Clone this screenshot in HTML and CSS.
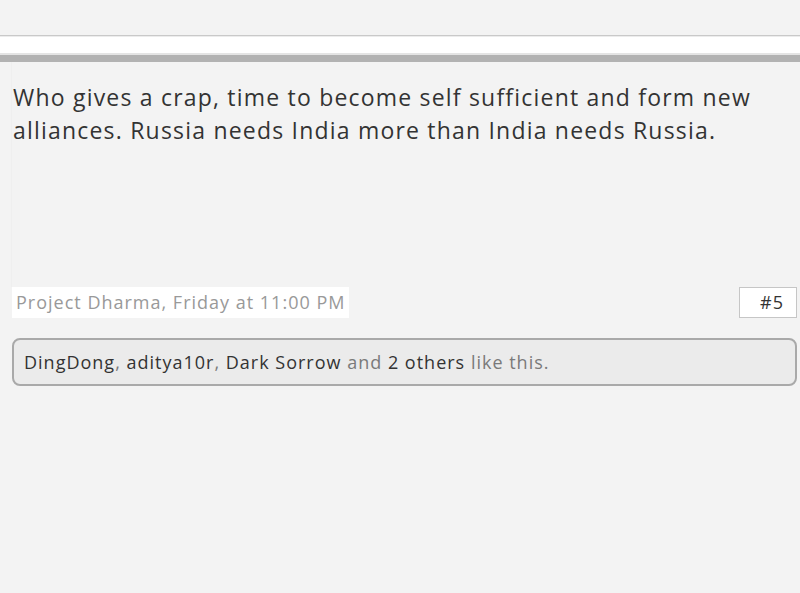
FILE: index.html
```html
<!DOCTYPE html>
<html lang="en">
<head>
    <meta charset="UTF-8">
    <meta name="viewport" content="width=device-width, initial-scale=1.0">
    <title>Post #5</title>
    <link rel="stylesheet" href="styles.css">
</head>
<body>
    <!-- 顶部分隔条 -->
    <div class="topbar">
        <div class="topbar-inner"></div>
    </div>
    <div class="topband"></div>

    <!-- 帖子 -->
    <div class="post">
        <div class="message">
            Who gives a crap, time to become self sufficient and form new alliances. Russia needs India more than India needs Russia.
        </div>

        <div class="meta">
            <span class="author">Project Dharma, Friday at 11:00 PM</span>
            <span class="num">#5</span>
        </div>

        <div class="likes">
            <span class="name">DingDong</span>, <span class="name">aditya10r</span>, <span class="name">Dark Sorrow</span> and <span class="name">2 others</span> like this.
        </div>
    </div>
</body>
</html>
```

FILE: styles.css
```css
*{
    margin: 0;
    padding: 0;
    box-sizing: border-box;
}

body{
    background-color: #f3f3f3;
    font-family: "Open Sans", "Noto Sans", sans-serif;
    color: #333;
}

/* 顶部分隔条 */
.topbar{
    margin-top: 35px;
    border-top: 1px solid #c9c9c9;
    background-color: #fff;
}
.topbar-inner{
    height: 19px;
    border-top: 1px solid #ececec;
    border-bottom: 2px solid #e4e4e4;
}
.topband{
    height: 7px;
    background-color: #b2b2b2;
}

/* 帖子 */
.post{
    padding: 0 3px 0 12px;
}

.message{
    min-height: 225px;
    padding: 19px 0 0 1px;
    border-left: 1px solid #efefef;
    margin-left: -1px;
    font-size: 23px;
    line-height: 33px;
    letter-spacing: 1.2px;
    color: #333;
}

.meta{
    display: flex;
    justify-content: space-between;
    align-items: center;
}
.author{
    background-color: #fff;
    height: 31px;
    line-height: 31px;
    padding: 0 4px;
    font-size: 18px;
    letter-spacing: 1px;
    color: #999;
}
.num{
    width: 58px;
    height: 31px;
    line-height: 29px;
    padding: 0 12px;
    text-align: right;
    background-color: #fff;
    border: 1px solid #c6c6c6;
    font-size: 18px;
    letter-spacing: 1px;
    color: #333;
}

.likes{
    margin-top: 20px;
    height: 48px;
    line-height: 44px;
    padding: 0 10px;
    background-color: #ebebeb;
    border: 2px solid #a9a9a9;
    border-radius: 8px;
    font-size: 18px;
    letter-spacing: 1px;
    color: #7a7a7a;
}
.likes .name{
    color: #333;
}
```
